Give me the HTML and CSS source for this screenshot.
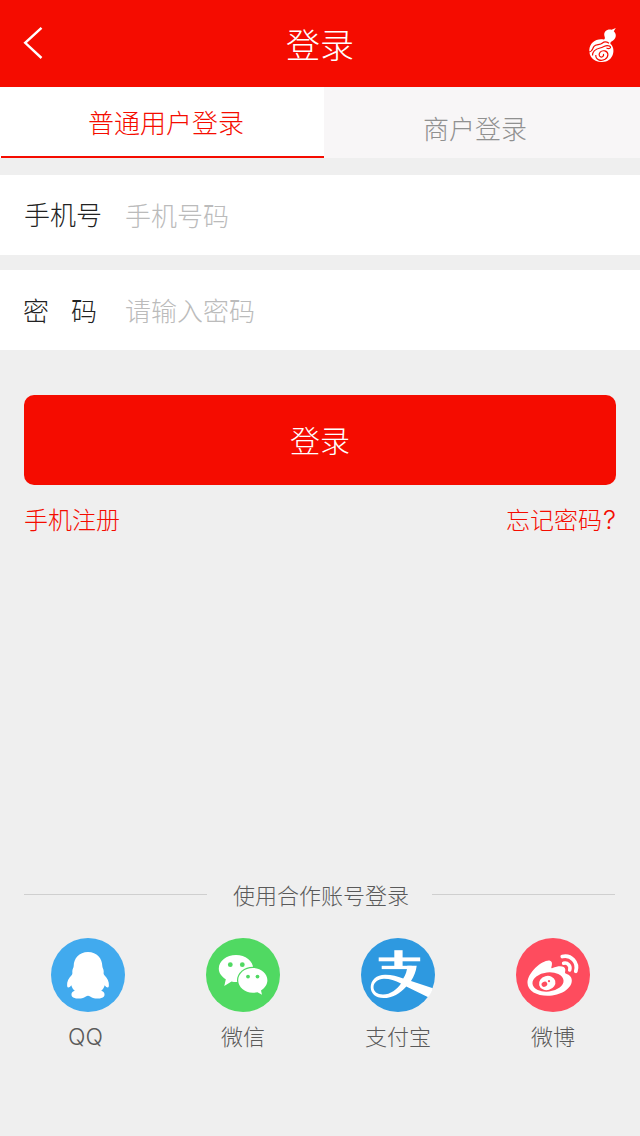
FILE: index.html
```html
<!DOCTYPE html>
<html lang="zh-CN">
<head>
    <meta charset="utf-8">
    <title>登录</title>
    <meta name="viewport" content="width=device-width, initial-scale=1.0">
    <link rel="stylesheet" href="styles.css">
</head>
<body>
    <div class="page">
        <header class="header">
            <a class="back" href="#">
                <svg width="20" height="34" viewBox="0 0 20 34"><path d="M18.500 1.800 2.200 16.800 18.500 32" /></svg>
            </a>
            <h1>登录</h1>
            <a class="logo" href="#">
                <svg width="30" height="36" viewBox="0 0 30 36">
                    <path fill="#fff" d="M27.800 1 25.800 4.200C29 7 28.500 12 23.500 14.500 22.400 15.200 22.200 16 22.500 17 28 21 26.200 35 14 35 5 35 1 29 1.300 23 1.600 16 8 11.200 15.500 12.500 16.800 12.700 17.300 11.200 16.500 9.200 15.200 4.500 19.500 1.800 23.500 2.800Z" />
                    <path class="line" d="M1 25C5 24.500 4.200 21.500 6 19.300 8 17 12 18.300 14.500 16 16.500 14.300 19 15 21 16.300" />
                    <path class="line" d="M4.500 28.500C4.500 23.500 8.500 21.800 12 21 16.500 20 17.500 17.300 21.500 19 24 20.500 21.500 22.500 18.500 21" />
                    <path class="line" d="M7.800 28C7.500 33 13 34.500 17 32.300 21 29.800 20.800 25 16.800 23.900 12.800 23 10.200 26.500 11.500 29 13.200 31.200 16.300 29.500 15.500 26.800" />
                </svg>
            </a>
        </header>

        <nav class="tabs">
            <a class="tab active" href="#"><span>普通用户登录</span></a>
            <a class="tab" href="#"><span>商户登录</span></a>
        </nav>

        <form class="login-form" action="">
            <div class="field">
                <label for="phone">手机号</label>
                <input id="phone" type="text" placeholder="手机号码">
            </div>
            <div class="field">
                <label class="spread" for="password"><span>密</span><span>码</span></label>
                <input id="password" type="password" placeholder="请输入密码">
            </div>
            <button class="submit" type="submit">登录</button>
        </form>

        <div class="links">
            <a href="#">手机注册</a>
            <a href="#">忘记密码<span class="latin">?</span></a>
        </div>

        <section class="partners">
            <div class="divider"><span>使用合作账号登录</span></div>
            <div class="partner-list">
                <a class="partner" href="#">
                    <svg width="74" height="74" viewBox="0 0 74 74">
                        <circle cx="37" cy="37" r="37" fill="#41aaee" />
                        <path fill="#fff" d="M37 14C28 14 22.700 20.500 22.700 28 22.700 30 21.300 31 21.300 33.500 21.300 35 21.700 35.500 20.800 37 17.500 40 15.800 44 16.100 47.500 16.300 50.500 18.300 50 20.300 47.300 21 50 22.200 51.600 23.800 52.700 21 53.500 20.300 55 20.500 57 21 60.700 27.500 61.200 32 60 34.500 59.300 35.500 57.800 37 57.800 38.500 57.800 39.500 59.300 42 60 46.500 61.200 53 60.700 53.500 57 53.700 55 53 53.500 50.200 52.700 51.800 51.600 53 50 53.700 47.300 55.700 50 57.700 50.500 57.900 47.500 58.200 44 56.500 40 53.200 37 52.300 35.500 52.700 35 52.700 33.500 52.700 31 51.300 30 51.300 28 51.300 20.500 46 14 37 14Z" />
                    </svg>
                    <span class="latin qq">QQ</span>
                </a>
                <a class="partner" href="#">
                    <svg width="74" height="74" viewBox="0 0 74 74">
                        <circle cx="37" cy="37" r="37" fill="#50d962" />
                        <path fill="#fff" d="M30 17C20.500 17 12.800 23 12.800 30.500 12.800 35 15.500 38.500 19.800 41.200L18.300 48 25.500 43.500C27 44 28.500 44.100 30 44.100 39.500 44.100 47.200 38 47.200 30.500S39.500 17 30 17Z" />
                        <ellipse cx="46.800" cy="42.300" rx="15.800" ry="13.600" fill="#50d962" />
                        <path fill="#fff" d="M46.800 30C38.700 30 32.200 35.500 32.200 42.300S38.700 54.800 46.800 54.800C48.500 54.800 50 54.600 51.500 54.200L56 56.700 55 52.500C58.800 50.200 61.400 46.500 61.400 42.300 61.400 35.500 54.900 30 46.800 30Z" />
                        <g fill="#50d962">
                            <circle cx="24.300" cy="26.700" r="2.400" />
                            <circle cx="36.300" cy="26.700" r="2.400" />
                            <circle cx="42" cy="38.600" r="1.900" />
                            <circle cx="51.500" cy="38.600" r="1.900" />
                        </g>
                    </svg>
                    <span>微信</span>
                </a>
                <a class="partner" href="#">
                    <svg width="74" height="74" viewBox="0 0 74 74">
                        <circle cx="37" cy="37" r="37" fill="#2e99e0" />
                        <g fill="#fff">
                            <rect x="17.700" y="19.400" width="41.500" height="3.900" />
                            <rect x="33.300" y="12.200" width="8.300" height="17" />
                            <rect x="20.700" y="27.800" width="30" height="3.300" />
                            <path fill-rule="evenodd" d="M46.300 27.800H55.700C55 33.500 53 38.500 50 43L71.900 50.200C70.800 53.500 69.200 56.600 67.200 59.200L45.300 48.400C39 55.500 31.500 60 22.500 60 14.500 60 9.700 55.500 9.700 49.300 9.700 42 15.500 37 24 36.800 30.500 36.700 36 38.200 42.200 40.500 44.700 37 46 33 46.300 27.800ZM40 45.500C34 42.500 28.500 40.600 22.800 40.700 17 40.900 12.700 44.300 12.500 49 12.300 53.500 16.300 56.500 22 56.500 29.500 56.500 36 51.500 40 45.500Z" />
                        </g>
                    </svg>
                    <span>支付宝</span>
                </a>
                <a class="partner" href="#">
                    <svg width="74" height="74" viewBox="0 0 74 74">
                        <circle cx="37" cy="37" r="37" fill="#fe4c5e" />
                        <path fill="#fff" d="M33.500 22.500C27 21.500 11.500 34 11.500 45 11.500 53 21 57.800 31.500 57.800 45 57.800 55.800 50.500 55.800 42.500 55.800 38.500 52.800 36.500 49.700 35.500 48.300 35 49.500 33.500 49.300 31.500 48.800 27.500 43 27.200 36.500 30 34.800 30.700 35.300 29.500 35.800 27.500 36.300 25 36 23 33.500 22.500Z" />
                        <ellipse cx="32" cy="44" rx="15.600" ry="9.600" transform="rotate(-6 32 44)" fill="#fe4c5e" />
                        <ellipse cx="31.200" cy="45" rx="8.300" ry="7.100" transform="rotate(-15 31.200 45)" fill="#fff" />
                        <ellipse cx="28.400" cy="46.200" rx="2.900" ry="2.500" transform="rotate(-25 28.400 46.200)" fill="#fe4c5e" />
                        <circle cx="33" cy="43.200" r="1.100" fill="#fe4c5e" />
                        <g fill="none" stroke="#fff" stroke-linecap="round">
                            <path stroke-width="3.800" d="M46.300 18.500C55 16.300 62.600 24.300 59.800 33.300" />
                            <path stroke-width="3.500" d="M47.600 25.300C51.700 24.300 55 27.900 53.700 32" />
                        </g>
                    </svg>
                    <span>微博</span>
                </a>
            </div>
        </section>
    </div>
</body>
</html>
```
FILE: styles.css
```css
:root {
    --red: #f50c00;
    --bg: #efefef;
    --text: #222222;
    --muted: #909090;
    --placeholder: #bbbbbb;
}

* {
    box-sizing: border-box;
}

body {
    margin: 0;
    background: var(--bg);
    color: var(--text);
    font-family: "Noto Sans CJK SC", sans-serif;
    font-weight: 300;
}

a {
    color: inherit;
    text-decoration: none;
}

svg {
    display: block;
    flex-shrink: 0;
}

.latin {
    font-family: Inter, "Noto Sans CJK SC", sans-serif;
}

.page {
    display: flex;
    flex-direction: column;
    height: 1136px;
}

.header {
    display: flex;
    align-items: center;
    justify-content: space-between;
    height: 87px;
    padding: 0 22px 2px 23px;
    background: var(--red);
    color: #fff;
}

.header h1 {
    margin: 0;
    padding: 2px 1px 0 0;
    font-size: 34px;
    font-weight: 300;
    line-height: 50px;
}

.back,
.logo {
    width: 30px;
}

.logo {
    padding-top: 4px;
}

.back path {
    fill: none;
    stroke: #fff;
    stroke-width: 2.4;
}

.logo .line {
    fill: none;
    stroke: var(--red);
    stroke-width: 1.2;
}

.tabs {
    display: flex;
    height: 71px;
    background: #fff;
    font-size: 26px;
    line-height: 38px;
}

.tab {
    width: 316px;
    padding: 22px 14px 0 0;
    background: #f8f6f7;
    color: var(--muted);
    text-align: center;
}

.tab.active {
    width: 323px;
    margin-left: 1px;
    padding: 16px 0 0 7px;
    border-bottom: 2px solid var(--red);
    background: #fff;
    color: var(--red);
}

.login-form {
    display: flex;
    flex-direction: column;
    gap: 15px;
    padding-top: 17px;
}

.field {
    display: flex;
    align-items: center;
    height: 80px;
    padding: 0 24px 2px;
    background: #fff;
    font-size: 26px;
}

.field label {
    width: 101px;
    padding-bottom: 2px;
}

.field .spread {
    display: flex;
    justify-content: space-between;
    margin-left: -1px;
    margin-right: 28px;
    padding-bottom: 0;
    width: 74px;
}

.field input {
    flex: 1;
    padding: 0;
    border: none;
    outline: none;
    background: none;
    font: inherit;
}

.field input::placeholder {
    color: var(--placeholder);
}

.submit {
    height: 90px;
    margin: 30px 24px 0;
    padding-bottom: 3px;
    border: none;
    border-radius: 10px;
    background: var(--red);
    color: #fff;
    font: inherit;
    font-size: 30px;
}

.links {
    display: flex;
    justify-content: space-between;
    padding: 16px 24px 0;
    color: var(--red);
    font-size: 24px;
    line-height: 36px;
}

.links .latin {
    padding-left: 1px;
    font-size: 26px;
    line-height: 24px;
}

.partners {
    margin-top: auto;
    padding: 0 25px 84px 24px;
    color: #5a5a5a;
    font-size: 22px;
    line-height: 32px;
}

.divider {
    display: flex;
    align-items: center;
}

.divider span {
    padding: 0 23px 0 26px;
}

.divider::before,
.divider::after {
    content: "";
    flex: 1;
    height: 1px;
    background: #cfcfcf;
}

.partner-list {
    display: flex;
    justify-content: space-between;
    margin-top: 28px;
    padding: 0 25px 0 27px;
}

.partner {
    display: flex;
    flex-direction: column;
    align-items: center;
    gap: 7px;
    width: 74px;
    height: 114px;
}

.qq {
    margin-right: 5px;
    padding-top: 2px;
    font-size: 23px;
}
```
